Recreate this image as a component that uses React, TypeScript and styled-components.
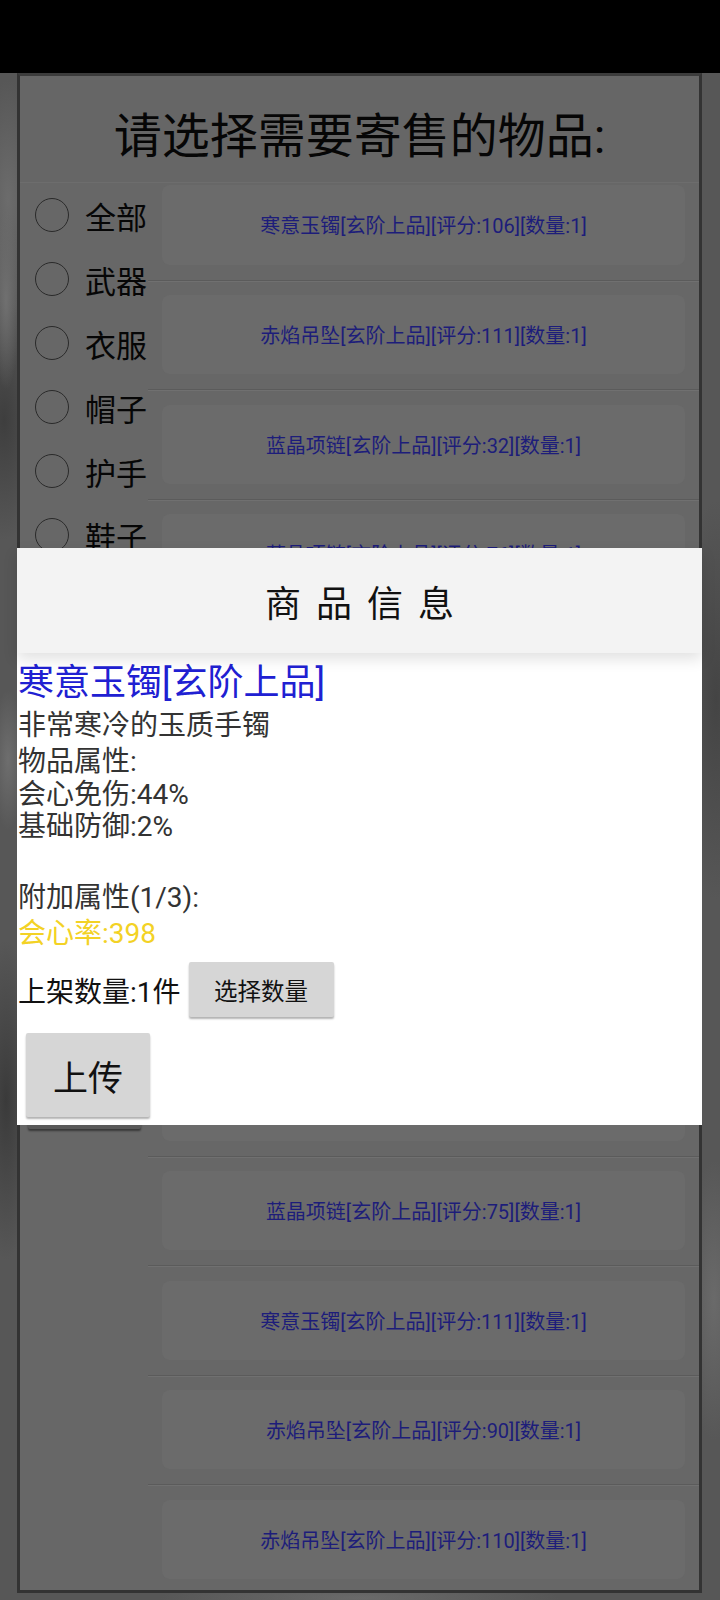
import React from 'react';
import styled, { createGlobalStyle } from 'styled-components';

const categories = ['全部', '武器', '衣服', '帽子', '护手', '鞋子', '项链', '手镯', '吊坠', '戒指'];

const items = [
  '寒意玉镯[玄阶上品][评分:106][数量:1]',
  '赤焰吊坠[玄阶上品][评分:111][数量:1]',
  '蓝晶项链[玄阶上品][评分:32][数量:1]',
  '蓝晶项链[玄阶上品][评分:76][数量:1]',
  '赤焰吊坠[玄阶上品][评分:98][数量:1]',
  '寒意玉镯[玄阶上品][评分:87][数量:1]',
  '蓝晶项链[玄阶上品][评分:64][数量:1]',
  '赤焰吊坠[玄阶上品][评分:102][数量:1]',
  '寒意玉镯[玄阶上品][评分:95][数量:1]',
  '蓝晶项链[玄阶上品][评分:75][数量:1]',
  '寒意玉镯[玄阶上品][评分:111][数量:1]',
  '赤焰吊坠[玄阶上品][评分:90][数量:1]',
  '赤焰吊坠[玄阶上品][评分:110][数量:1]',
];

const attrs = ['物品属性:', '会心免伤:44%', '基础防御:2%'];

const App = function App() {
  return (
    <Screen>
      <GlobalStyle />
      <StatusBar />
      <Panel>
        <PanelTitle>请选择需要寄售的物品:</PanelTitle>
        <PanelBody>
          <CategoryColumn>
            {categories.map((name) => (
              <RadioRow key={name}>
                <RadioCircle />
                <RadioLabel>{name}</RadioLabel>
              </RadioRow>
            ))}
            {/* button hidden under the dialog, only its lower edge shows */}
            <SideButton />
          </CategoryColumn>
          <ItemViewport>
            <ItemList>
              {items.map((text, i) => (
                <ItemRow key={i} first={i === 0}>
                  <ItemCard>{text}</ItemCard>
                </ItemRow>
              ))}
            </ItemList>
          </ItemViewport>
        </PanelBody>
      </Panel>

      <Dialog>
        <DialogHeader>商 品 信 息</DialogHeader>
        <DialogBody>
          <ItemName>寒意玉镯[玄阶上品]</ItemName>
          <ItemDesc>非常寒冷的玉质手镯</ItemDesc>
          <AttrBlock>
            {attrs.map((a) => (
              <AttrLine key={a}>{a}</AttrLine>
            ))}
            <AttrLine />
          </AttrBlock>
          <ExtraBlock>
            <ExtraLine>附加属性(1/3):</ExtraLine>
            <ExtraLine accent>会心率:398</ExtraLine>
          </ExtraBlock>
          <QtyRow>
            <QtyText>上架数量:1件</QtyText>
            <GreyButton w={145} h={55} size={23.5}>
              选择数量
            </GreyButton>
          </QtyRow>
          <UploadWrap>
            <GreyButton w={124} h={84} size={35}>
              上传
            </GreyButton>
          </UploadWrap>
        </DialogBody>
      </Dialog>
    </Screen>
  );
};

const GlobalStyle = createGlobalStyle`
  html, body {
    margin: 0;
    padding: 0;
  }
  body {
    font-family: "Roboto", "Noto Sans CJK SC", sans-serif;
    background: #555;
  }
`;

const Screen = styled.div`
  position: relative;
  width: 720px;
  height: 1600px;
  overflow: hidden;
  display: flex;
  flex-direction: column;
  background:
    radial-gradient(ellipse 14px 90px at 6px 300px, #707070, transparent),
    radial-gradient(ellipse 40px 120px at 4px 420px, #3e3e3e, transparent),
    radial-gradient(ellipse 16px 70px at 8px 760px, #6e6e6e, transparent),
    radial-gradient(ellipse 30px 160px at 6px 1100px, #3a3a3a, transparent),
    radial-gradient(ellipse 40px 200px at 716px 700px, #444, transparent),
    radial-gradient(ellipse 30px 140px at 714px 1300px, #6a6a6a, transparent),
    radial-gradient(ellipse 30px 120px at 8px 200px, #6c6c6c, transparent),
    radial-gradient(ellipse 200px 20px at 360px 1598px, #6a6a6a, transparent),
    #575757;
`;

const StatusBar = styled.div`
  height: 73px;
  flex-shrink: 0;
  background: #000;
`;

const Panel = styled.div`
  flex: 1;
  min-height: 0;
  margin: 0 18px 7px 17px;
  border: 3px solid #333;
  border-top-color: #3c3c3c;
  background: #666;
  display: flex;
  flex-direction: column;
  overflow: hidden;
`;

const PanelTitle = styled.div`
  height: 106px;
  flex-shrink: 0;
  padding-top: 6px;
  box-sizing: border-box;
  display: flex;
  align-items: center;
  justify-content: center;
  font-size: 48px;
  color: #060606;
  background: #666;
  position: relative;
  z-index: 1;
  box-shadow: 0 1px 0 #6d6d6d;
`;

const PanelBody = styled.div`
  flex: 1;
  min-height: 0;
  display: flex;
  background: #676767;
`;

const CategoryColumn = styled.div`
  width: 128px;
  flex-shrink: 0;
  display: flex;
  flex-direction: column;
  padding-top: 1px;
`;

const RadioRow = styled.div`
  height: 64px;
  display: flex;
  align-items: center;
  gap: 16px;
  padding-left: 15px;
`;

const RadioCircle = styled.div`
  width: 34px;
  height: 34px;
  box-sizing: border-box;
  border: 1.6px solid #2a2a2a;
  border-radius: 50%;
`;

const RadioLabel = styled.div`
  font-size: 31px;
  color: #060606;
  white-space: nowrap;
`;

const SideButton = styled.div`
  margin: 226px 0 0 8px;
  width: 113px;
  height: 80px;
  background: #595959;
  border-radius: 2px;
  box-shadow: 0 2px 2px rgba(0, 0, 0, 0.45);
`;

const ItemViewport = styled.div`
  flex: 1;
  min-width: 0;
  overflow: hidden;
`;

const ItemList = styled.div`
  margin-top: -12px;
`;

const ItemRow = styled.div<{ first?: boolean }>`
  height: 109.5px;
  box-sizing: border-box;
  padding: 14.5px 14px 15px 14px;
  border-top: ${(p) => (p.first ? 'none' : '1px solid #5b5b5b')};
  box-shadow: ${(p) => (p.first ? 'none' : 'inset 0 1px 0 #707070')};
`;

const ItemCard = styled.div`
  height: 100%;
  border-radius: 8px;
  background: #6b6b6b;
  display: flex;
  align-items: center;
  justify-content: center;
  font-size: 20px;
  color: #1d1d7a;
  white-space: nowrap;
`;

const Dialog = styled.div`
  position: absolute;
  left: 17px;
  top: 548px;
  width: 685px;
  height: 577px;
  background: #fff;
  display: flex;
  flex-direction: column;
`;

const DialogHeader = styled.div`
  height: 105px;
  flex-shrink: 0;
  background: #f3f3f3;
  display: flex;
  align-items: center;
  justify-content: center;
  font-size: 36px;
  word-spacing: 6px;
  color: #111;
  position: relative;
  z-index: 1;
  box-shadow: 0 6px 14px rgba(0, 0, 0, 0.12);
`;

const DialogBody = styled.div`
  padding: 7px 0 0 1px;
`;

const ItemName = styled.div`
  font-size: 36px;
  line-height: 46px;
  color: #2020d2;
`;

const ItemDesc = styled.div`
  font-size: 28px;
  line-height: 40px;
  color: #333;
`;

const AttrBlock = styled.div`
  display: flex;
  flex-direction: column;
`;

const AttrLine = styled.div`
  height: 32.5px;
  font-size: 28px;
  line-height: 32.5px;
  color: #333;
`;

const ExtraBlock = styled.div`
  margin-top: 4px;
  display: flex;
  flex-direction: column;
`;

const ExtraLine = styled.div<{ accent?: boolean }>`
  font-size: 28px;
  line-height: 36px;
  color: ${(p) => (p.accent ? '#f3d225' : '#333')};
`;

const QtyRow = styled.div`
  margin-top: 10px;
  display: flex;
  align-items: center;
  gap: 8px;
`;

const QtyText = styled.div`
  font-size: 28px;
  color: #111;
`;

const UploadWrap = styled.div`
  margin: 16px 0 0 8px;
`;

const GreyButton = styled.div<{ w: number; h: number; size: number }>`
  width: ${(p) => p.w}px;
  height: ${(p) => p.h}px;
  box-sizing: border-box;
  background: #d6d6d6;
  border-radius: 2px;
  box-shadow: 0 2px 2px rgba(0, 0, 0, 0.3);
  display: flex;
  align-items: center;
  justify-content: center;
  font-size: ${(p) => p.size}px;
  color: #111;
`;

export default App;
